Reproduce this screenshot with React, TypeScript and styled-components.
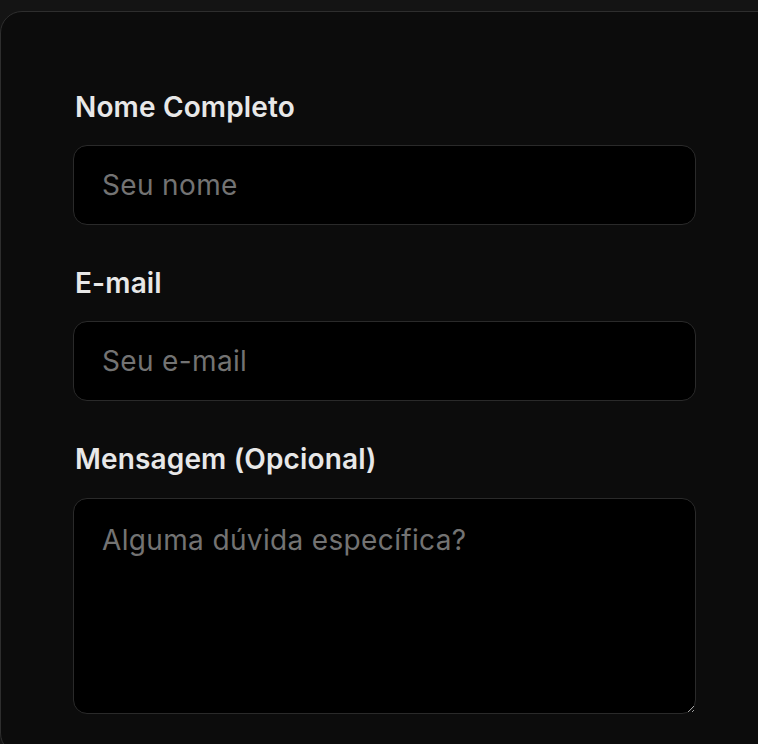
import React from "react";
import styled, { createGlobalStyle } from "styled-components";

const Global = createGlobalStyle`
  html, body { margin: 0; padding: 0; background: #141414; overflow: hidden; }
  body { font-family: Inter, "Noto Sans", sans-serif; }
  * { box-sizing: border-box; }
`;

const Page = styled.div`
  width: 758px;
  height: 744px;
  padding-top: 11px;
  overflow: hidden;
`;

const Card = styled.form`
  width: 780px;
  background: #0c0c0c;
  border: 1.5px solid #2e2e2e;
  border-radius: 22px;
  padding: 77px 0 40px 72px;
  display: flex;
  flex-direction: column;
  gap: 40px;
`;

const Field = styled.div<{ $gap?: number }>`
  width: 623px;
  display: flex;
  flex-direction: column;
  gap: ${(p) => p.$gap ?? 20}px;
`;

const Label = styled.label`
  font-size: 28px;
  line-height: 36px;
  font-weight: 600;
  letter-spacing: 0.15px;
  color: #e8e8e8;
  padding-left: 2px;
`;

const inputBase = `
  width: 100%;
  background: #000;
  border: 1px solid #2a2a2a;
  border-radius: 14px;
  color: #e8e8e8;
  font-family: Inter, "Noto Sans", sans-serif;
  font-size: 28px;
  letter-spacing: 0.35px;
  padding: 0 28px;
  outline: none;
  color-scheme: dark;
  &::placeholder { color: #737373; }
`;

const Input = styled.input`
  ${inputBase}
  height: 80px;
`;

const TextArea = styled.textarea`
  ${inputBase}
  height: 216px;
  padding-top: 23px;
  line-height: 36px;
  resize: vertical;
`;

export default function App() {
  return (
    <>
      <Global />
      <Page>
        <Card>
          <Field>
            <Label>Nome Completo</Label>
            <Input placeholder="Seu nome" />
          </Field>
          <Field>
            <Label>E-mail</Label>
            <Input placeholder="Seu e-mail" />
          </Field>
          <Field $gap={21}>
            <Label>Mensagem (Opcional)</Label>
            <TextArea placeholder="Alguma dúvida específica?" />
          </Field>
        </Card>
      </Page>
    </>
  );
}
